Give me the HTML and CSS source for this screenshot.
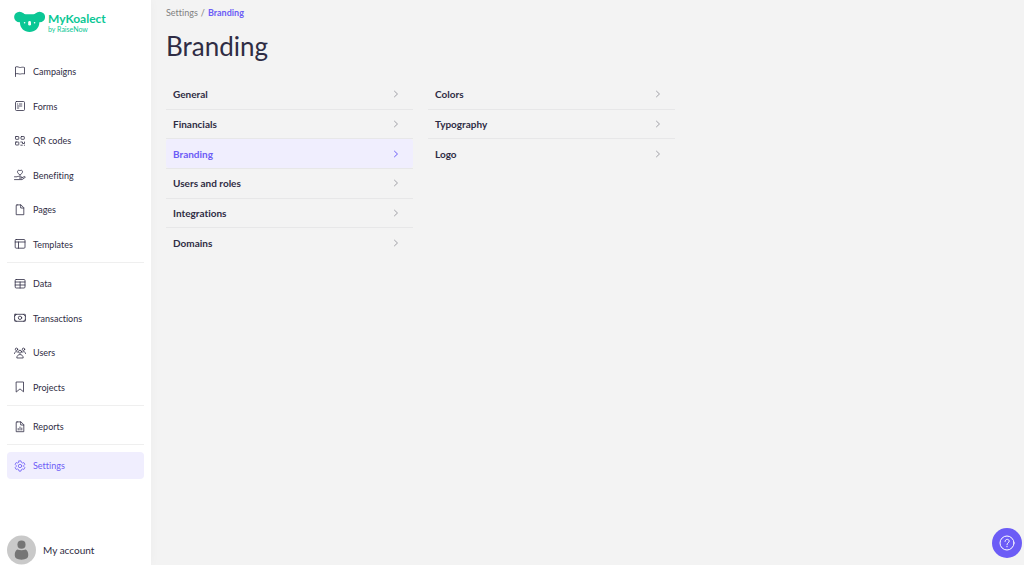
FILE: index.html
```html
<!DOCTYPE html>
<html lang="en">
<head>
<meta charset="utf-8">
<meta name="viewport" content="width=device-width, initial-scale=1">
<title>MyKoalect – Branding</title>
<link rel="stylesheet" href="styles.css">
</head>
<body>
<svg class="defs" aria-hidden="true">
  <symbol id="chevron" viewBox="0 0 8 8"><path d="M2.5 1.2 5.500 4 2.500 6.800"/></symbol>
</svg>
<div class="app">
  <aside class="sidebar">
    <a class="brand" href="#">
      <svg class="brand-mark" viewBox="0 0 31 22" aria-hidden="true">
        <g fill="#0bc795">
          <ellipse cx="5.600" cy="6" rx="5.500" ry="5.300"/>
          <ellipse cx="25.600" cy="6" rx="5.500" ry="5.300"/>
          <path d="M8 2.200 11.500 3.200h8L23 2.200 25.300 9v3c0 5-4.500 9-9.700 9S6 17 6 12V9Z"/>
        </g>
        <rect x="14.200" y="10" width="2.800" height="4.600" rx="1.400" fill="#fff"/>
        <circle cx="10.600" cy="11.800" r=".8" fill="#fff"/><circle cx="20.600" cy="11.800" r=".8" fill="#fff"/>
      </svg>
      <span class="brand-text"><strong>MyKoalect</strong><small>by RaiseNow</small></span>
    </a>
    <nav class="nav" aria-label="Main">
      <div class="nav-group group-fundraising">
        <a class="nav-item" href="#"><svg viewBox="0 0 12 12"><path d="M1.500 10.500V1c2-1 3.500.8 5 .5s2.500-.5 4 0V8c-1.500-.5-2.500-.3-4 0s-3-1-5-.2"/></svg>Campaigns</a>
        <a class="nav-item" href="#"><svg viewBox="0 0 12 12"><rect x="1.500" y="1.500" width="9" height="9" rx="1"/><path d="M3.300 4h.4M5.300 4h2.500M3.300 6h4.500M3.300 8h1.500"/></svg>Forms</a>
        <a class="nav-item" href="#"><svg viewBox="0 0 12 12"><rect x="1.500" y="1.500" width="3.300" height="2.800" rx=".5"/><rect x="7" y="1.500" width="3.300" height="2.800" rx=".5"/><rect x="1.500" y="7" width="3.300" height="3" rx=".5"/><path d="M6.800 7h1.700v1.500h2V7M6.800 10.200h1.500M10.300 10.200h.3"/></svg>QR codes</a>
        <a class="nav-item" href="#"><svg viewBox="0 0 12 12"><path d="M6 6C4.500 5 3.500 4 3.500 2.700 3.500 1 5.500.8 6 2c.5-1.200 2.500-1 2.500.7C8.500 4 7.500 5 6 6ZM.5 7.800H3c1.200-.8 2-.3 3 0h1.300c1 .2.700 1.300-.1 1.300H5.500M7.800 8.800l2.500-1.200c1-.3 1.300.6.500 1.100L8 10.600H.5"/></svg>Benefiting</a>
        <a class="nav-item" href="#"><svg viewBox="0 0 12 12"><path d="M3 .9h4L9.800 3.700v7H2.200V1.700q0-.8.800-.8ZM6.700 1v3h3"/></svg>Pages</a>
        <a class="nav-item" href="#"><svg viewBox="0 0 12 12"><rect x="1.200" y="1.500" width="9.800" height="8.700" rx="1"/><path d="M1.200 4H11M4.500 4v6.200"/></svg>Templates</a>
      </div>
      <hr>
      <div class="nav-group group-data">
        <a class="nav-item" href="#"><svg viewBox="0 0 12 12"><rect x="1.200" y="1.500" width="9.800" height="8.500" rx="1"/><path d="M1.200 4H11M1.200 7H11M6.100 4v6"/></svg>Data</a>
        <a class="nav-item" href="#"><svg viewBox="0 0 12 12"><rect x=".6" y="2.300" width="10.800" height="7" rx=".5"/><circle cx="6" cy="5.800" r="1.700"/><path d="M.6 4.200 2.500 2.500M9.500 2.500l1.900 1.700M.6 7.500l1.900 1.700M9.500 9.200l1.900-1.700"/></svg>Transactions</a>
        <a class="nav-item" href="#"><svg viewBox="0 0 12 12"><circle cx="2.500" cy="2.300" r="1.200"/><circle cx="9.500" cy="2.300" r="1.200"/><circle cx="6" cy="4.700" r="1.500"/><path d="M.4 6.500C.6 4.500 2.500 4.200 3.600 5M11.600 6.500C11.400 4.500 9.500 4.200 8.400 5M2.800 10.600c0-4.200 6.400-4.200 6.400 0Z"/></svg>Users</a>
        <a class="nav-item" href="#"><svg viewBox="0 0 12 12"><path d="M2.500 1h7v9.800L6 7.900l-3.500 2.900Z"/></svg>Projects</a>
      </div>
      <hr>
      <div class="nav-group">
        <a class="nav-item" href="#"><svg viewBox="0 0 12 12"><path d="M3 .9h4L9.800 3.700v7H2.200V1.700q0-.8.800-.8ZM6.700 1v3h3M4.200 9V7.500M6 9V6M7.800 9V7"/></svg>Reports</a>
      </div>
      <hr>
      <div class="nav-group">
        <a class="nav-item active" href="#" aria-current="page"><svg viewBox="0 0 12 12"><circle cx="6" cy="6" r="1.700"/><path d="M5 .9h2l.4 1.500 1 .6 1.500-.4 1 1.700L9.800 5.400v1.200l1.100 1.100-1 1.700-1.500-.4-1 .6L7 11.100H5l-.4-1.500-1-.6-1.500.4-1-1.700 1.100-1.100V5.400L1.100 4.300l1-1.700 1.500.4 1-.6Z"/></svg>Settings</a>
      </div>
    </nav>
    <a class="account" href="#">
      <svg class="avatar" viewBox="0 0 30 30" aria-hidden="true"><circle cx="15" cy="15" r="15" fill="#c9c9c9"/><circle cx="15" cy="9.500" r="4.200" fill="#757575"/><path d="M10.500 14.500q4.500 1.500 9 0Q22 16 22 20.500 22 25 15 25t-7-4.500q0-4.500 2.500-6Z" fill="#757575"/></svg>
      My account
    </a>
  </aside>
  <main class="main">
    <nav class="crumbs" aria-label="Breadcrumb"><a href="#">Settings</a><span>/</span><a class="current" href="#" aria-current="page">Branding</a></nav>
    <h1>Branding</h1>
    <div class="menus">
      <ul class="menu menu-sections">
        <li><a href="#">General<svg><use href="#chevron"/></svg></a></li>
        <li><a href="#">Financials<svg><use href="#chevron"/></svg></a></li>
        <li><a class="active" href="#">Branding<svg><use href="#chevron"/></svg></a></li>
        <li><a href="#">Users and roles<svg><use href="#chevron"/></svg></a></li>
        <li><a href="#">Integrations<svg><use href="#chevron"/></svg></a></li>
        <li><a href="#">Domains<svg><use href="#chevron"/></svg></a></li>
      </ul>
      <ul class="menu menu-branding">
        <li><a href="#">Colors<svg><use href="#chevron"/></svg></a></li>
        <li><a href="#">Typography<svg><use href="#chevron"/></svg></a></li>
        <li><a href="#">Logo<svg><use href="#chevron"/></svg></a></li>
      </ul>
    </div>
  </main>
</div>
<button class="help" type="button" aria-label="Help">
  <svg viewBox="0 0 16 16" aria-hidden="true"><circle cx="8" cy="8" r="7"/><path d="M6 6.400C6 3.600 10.200 3.700 10.200 6.200 10.200 7.800 8 7.800 8 9.500M8 11.200v.6"/></svg>
</button>
</body>
</html>
```
FILE: styles.css
```css
* { box-sizing: border-box; }
body {
  margin: 0;
  background: #f3f3f3;
  color: #2f2c44;
  font-family: Lato, "Liberation Sans", sans-serif;
  font-size: 9px;
  font-variant-ligatures: none;
}
a { color: inherit; text-decoration: none; }
svg { flex: none; fill: none; stroke: currentColor; stroke-linecap: round; stroke-linejoin: round; }
.defs { position: absolute; width: 0; height: 0; }

.app { display: flex; min-height: 100vh; }
.sidebar {
  display: flex;
  flex-direction: column;
  flex: 0 0 151px;
  padding: 11px 7px 0;
  background: #fff;
  box-shadow: 0 0 10px rgba(0, 0, 0, 0.03);
}

.brand { display: flex; gap: 3px; padding-left: 7px; color: #0bc795; }
.brand-mark { width: 31px; height: 22px; stroke: none; }
.brand-text { display: flex; flex-direction: column; padding-top: 1px; }
.brand-text strong { font-size: 12px; line-height: 13px; font-weight: 700; }
.brand-text small { font-size: 7px; line-height: 8px; font-weight: 400; }

.nav { margin-top: 25px; }
.nav-group { display: flex; flex-direction: column; justify-content: space-between; }
.group-fundraising { min-height: 200px; }
.group-data { min-height: 131px; }
.nav hr { height: 1px; margin: 4px 0 7px; border: 0; background: #efefef; }
.nav-item {
  display: flex;
  align-items: center;
  gap: 7px;
  height: 27px;
  padding: 0 7px;
  border-radius: 4px;
}
.nav-item svg { width: 12px; height: 12px; stroke-width: 0.8; }
.nav-item.active { background: #f0eefe; color: #6c5cf6; }

.account {
  display: flex;
  align-items: center;
  gap: 7px;
  margin-top: auto;
  font-size: 10px;
}
.avatar { width: 29px; height: 30px; stroke: none; }

.main { flex: 1; min-width: 0; padding: 7px 15px; }
.crumbs { display: flex; gap: 3px; line-height: 12px; color: #808080; }
.crumbs .current { color: #6c5cf6; font-weight: 700; }
h1 { margin: 11px 0 18px; font-size: 26px; line-height: 32px; font-weight: 400; }

.menus {
  display: grid;
  grid-template-columns: repeat(2, minmax(0, 247px));
  gap: 15px;
  align-items: start;
}
.menu { display: grid; grid-auto-rows: 1fr; margin: 0; padding: 0; list-style: none; }
.menu-sections { min-height: 178px; }
.menu-branding { min-height: 89px; }
.menu li { display: grid; border-bottom: 1px solid #e7e7e8; }
.menu li:last-child { border-bottom-color: transparent; }
.menu a {
  display: flex;
  align-items: center;
  justify-content: space-between;
  padding: 0 13px 0 7px;
  font-size: 10px;
  font-weight: 700;
}
.menu svg { width: 8px; height: 8px; color: #a0a0a6; }
.menu .active { border-radius: 3px; background: #f0eefe; color: #6c5cf6; }
.menu .active svg { color: inherit; }

.help {
  position: fixed;
  right: 2px;
  bottom: 7px;
  display: grid;
  place-items: center;
  width: 30px;
  height: 30px;
  padding: 0;
  border: 0;
  border-radius: 50%;
  background: #6c5cf6;
  color: #fff;
}
.help svg { width: 16px; height: 16px; }
```
